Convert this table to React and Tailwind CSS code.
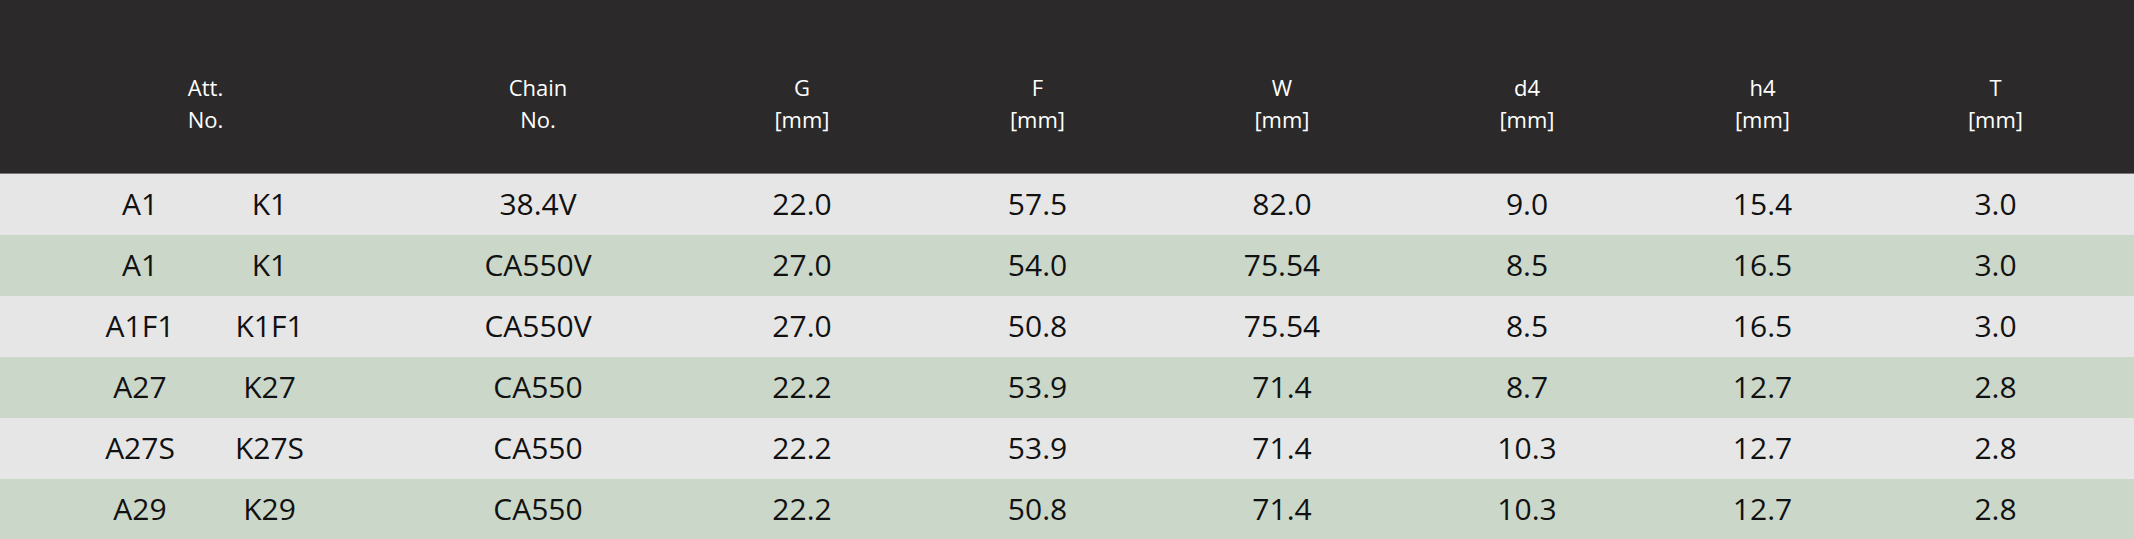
import React from 'react';

const cols = 'grid grid-cols-[128px_131px_57px_292px_236px_235px_254px_236px_235px_231px] pl-[76px]';

const rows = [
  ['A1', 'K1', '38.4V', '22.0', '57.5', '82.0', '9.0', '15.4', '3.0'],
  ['A1', 'K1', 'CA550V', '27.0', '54.0', '75.54', '8.5', '16.5', '3.0'],
  ['A1F1', 'K1F1', 'CA550V', '27.0', '50.8', '75.54', '8.5', '16.5', '3.0'],
  ['A27', 'K27', 'CA550', '22.2', '53.9', '71.4', '8.7', '12.7', '2.8'],
  ['A27S', 'K27S', 'CA550', '22.2', '53.9', '71.4', '10.3', '12.7', '2.8'],
  ['A29', 'K29', 'CA550', '22.2', '50.8', '71.4', '10.3', '12.7', '2.8'],
];

const units = ['G', 'F', 'W', 'd4', 'h4', 'T'];

const Cell = ({ children, className = '' }) => (
  <div className={`flex justify-center whitespace-nowrap ${className}`}>{children}</div>
);

const App = () => {
  return (
    <div className="w-[2134px] h-[539px] overflow-hidden bg-white font-['Open_Sans',sans-serif]">
      {/* header */}
      <div className={`${cols} h-[174px] bg-[#2b292a] border-b border-[#777777] items-center pt-[33px] text-white text-[22px] leading-[32px]`}>
        <Cell className="col-span-2 flex-col items-center text-center">
          <span>Att.</span>
          <span>No.</span>
        </Cell>
        <Cell className="col-start-4 flex-col items-center text-center">
          <span>Chain</span>
          <span>No.</span>
        </Cell>
        {units.map(u => (
          <Cell key={u} className="flex-col items-center text-center">
            <span>{u}</span>
            <span>[mm]</span>
          </Cell>
        ))}
      </div>

      {/* body */}
      {rows.map((r, i) => (
        <div
          key={i}
          className={`${cols} h-[61px] items-center pb-[2px] text-[30px] text-[#111111] ${i % 2 === 0 ? 'bg-[#e6e6e6]' : 'bg-[#cad7c9]'}`}
        >
          <Cell>{r[0]}</Cell>
          <Cell>{r[1]}</Cell>
          <Cell className="col-start-4">{r[2]}</Cell>
          {r.slice(3).map((v, j) => (
            <Cell key={j}>{v}</Cell>
          ))}
        </div>
      ))}
    </div>
  );
};

export default App;
